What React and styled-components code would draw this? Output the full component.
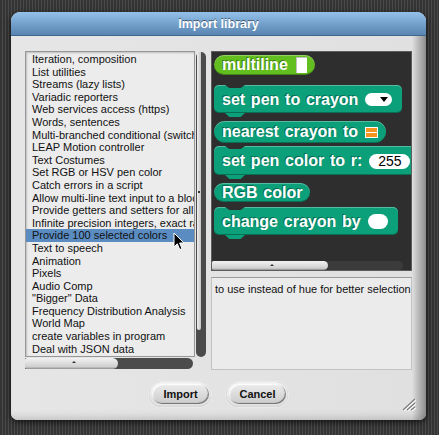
import React from "react";
import styled, { createGlobalStyle } from "styled-components";

const libraries = [
  "Iteration, composition",
  "List utilities",
  "Streams (lazy lists)",
  "Variadic reporters",
  "Web services access (https)",
  "Words, sentences",
  "Multi-branched conditional (switch)",
  "LEAP Motion controller",
  "Text Costumes",
  "Set RGB or HSV pen color",
  "Catch errors in a script",
  "Allow multi-line text input to a block",
  "Provide getters and setters for all GUI-controlled attributes",
  "Infinite precision integers, exact rationals, complex",
  "Provide 100 selected colors",
  "Text to speech",
  "Animation",
  "Pixels",
  "Audio Comp",
  "\"Bigger\" Data",
  "Frequency Distribution Analysis",
  "World Map",
  "create variables in program",
  "Deal with JSON data",
];

const SELECTED = 14;
const PEN = "#0ca07a";
const OPERATOR = "#63bf20";
const PALETTE_BG = "#2e2e2e";

function App() {
  return (
    <Page>
      <GlobalStyle />
      <Dialog>
        <TitleBar>Import library</TitleBar>
        <Body>
          <Main>
            <ListColumn>
              <ListBox>
                {libraries.map((name, i) => (
                  <Item key={name} $selected={i === SELECTED}>
                    {name}
                  </Item>
                ))}
              </ListBox>
              <VTrack>
                <VThumb />
              </VTrack>
              <HTrack $width={168}>
                <HThumb $width={93} />
              </HTrack>
              <Pointer width="13" height="19" viewBox="0 0 13 19">
                <path
                  d="M1 1 L1 15 L4.3 11.8 L6.8 17.6 L9 16.6 L6.6 11 L11 11 Z"
                  fill="#000"
                  stroke="#fff"
                  strokeWidth="1"
                  strokeLinejoin="round"
                />
              </Pointer>
            </ListColumn>

            <RightColumn>
              <Palette>
                <Blocks>
                  <Reporter $color={OPERATOR} $h={20} $mt={0}>
                    <span>multiline</span>
                    <TextSlot />
                  </Reporter>
                  <Command $color={PEN} $h={28} $mt={10}>
                    <span>set pen to crayon</span>
                    <DropSlot />
                  </Command>
                  <Reporter $color={PEN} $h={22} $mt={8}>
                    <span>nearest crayon to</span>
                    <ColorSlot />
                  </Reporter>
                  <Command $color={PEN} $h={29} $mt={3} $w={240}>
                    <span>set pen color to r:</span>
                    <NumSlot $w={41}>255</NumSlot>
                  </Command>
                  <Reporter $color={PEN} $h={19} $mt={8}>
                    <span>RGB color</span>
                  </Reporter>
                  <Command $color={PEN} $h={28} $mt={5}>
                    <span>change crayon by</span>
                    <NumSlot $w={20} />
                  </Command>
                </Blocks>
                <HTrack $width={191} $dark>
                  <HThumb $width={116} />
                </HTrack>
              </Palette>
              <Description>to use instead of hue for better selection</Description>
            </RightColumn>
          </Main>

          <ButtonRow>
            <PushButton>
              <ButtonFace>Import</ButtonFace>
            </PushButton>
            <PushButton>
              <ButtonFace>Cancel</ButtonFace>
            </PushButton>
          </ButtonRow>
        </Body>

        <ResizeHandle width="14" height="13" viewBox="0 0 14 13">
          <path d="M1 12 L13 1 M5 12 L13 5 M9 12 L13 9" stroke="#fff" strokeWidth="1.2" transform="translate(0.8 0.8)" />
          <path d="M1 12 L13 1 M5 12 L13 5 M9 12 L13 9" stroke="#7a7a7a" strokeWidth="1.2" />
        </ResizeHandle>
      </Dialog>
    </Page>
  );
}

const GlobalStyle = createGlobalStyle`
  html, body {
    margin: 0;
    padding: 0;
  }
  body {
    width: 439px;
    height: 435px;
    overflow: hidden;
    background: repeating-linear-gradient(90deg, #343434 0 2px, #4a4a4a 2px 3px);
    font-family: "Liberation Sans", Arial, sans-serif;
  }
`;

const Page = styled.div`
  padding: 12px 0 0 11px;
`;

const Dialog = styled.div`
  position: relative;
  width: 415px;
  height: 408px;
  display: flex;
  flex-direction: column;
  border-radius: 9px 9px 7px 7px;
  overflow: hidden;
  background: #e1e1e1;
  box-shadow: 0 2px 6px rgba(0, 0, 0, 0.7);
`;

const TitleBar = styled.div`
  flex: none;
  height: 23px;
  display: flex;
  align-items: center;
  justify-content: center;
  background: linear-gradient(#93c1ea, #5784b0);
  border-bottom: 1px solid #3f678e;
  color: #fff;
  font-size: 12.5px;
  font-weight: bold;
  text-shadow: 0 -1px 0 rgba(0, 0, 0, 0.5);
`;

const Body = styled.div`
  flex: 1;
  display: flex;
  flex-direction: column;
  padding: 15px 14px 0 14px;
  background: linear-gradient(90deg, #e6e6e6 0, #e0e0e0 calc(100% - 14px), #d4d4d4 calc(100% - 12px), #8c8c8c 100%);
  box-shadow: inset 0 -8px 8px -6px rgba(0, 0, 0, 0.18);
`;

const Main = styled.div`
  display: flex;
  gap: 5px;
  height: 319px;
`;

const ListColumn = styled.div`
  position: relative;
  width: 181px;
  display: grid;
  grid-template-columns: 170px 11px;
  grid-template-rows: 306px 13px;
`;

const ListBox = styled.div`
  background: #ececec;
  border: 1px solid #979797;
  box-shadow: inset 1px 1px 2px rgba(0, 0, 0, 0.2);
  padding-top: 1px;
  overflow: hidden;
`;

const Item = styled.div`
  height: 12.6px;
  line-height: 12.6px;
  padding-left: 6px;
  font-size: 11px;
  color: #111;
  white-space: nowrap;
  overflow: hidden;
  background: ${(p) => (p.$selected ? "#5a8cc2" : "transparent")};
`;

const VTrack = styled.div`
  margin: 1px 0 0 1px;
  width: 9px;
  display: flex;
  flex-direction: column;
  padding: 0 0 0 1px;
  border-radius: 5px;
  background: #4b4b4b;
`;

const VThumb = styled.div`
  position: relative;
  width: 4px;
  height: 278px;
  border-radius: 0 0 3px 3px;
  background: linear-gradient(90deg, #f0f0f0, #c4c4c4);

  &::after {
    content: "";
    position: absolute;
    left: 1px;
    top: 139px;
    width: 2px;
    height: 2px;
    background: #333;
  }
`;

const HTrack = styled.div`
  grid-column: 1 / span 2;
  margin-top: 1px;
  width: ${(p) => p.$width}px;
  height: ${(p) => (p.$dark ? 9 : 11)}px;
  display: flex;
  border-radius: 0 6px 6px 0;
  background: ${(p) => (p.$dark ? "#3b3b3b" : "#4b4b4b")};
  flex: none;
`;

const HThumb = styled.div`
  position: relative;
  width: ${(p) => p.$width}px;
  border-radius: 2px 6px 6px 2px;
  background: linear-gradient(#f2f2f2, #cfcfcf 80%, #8d8d8d);

  &::after {
    content: "";
    position: absolute;
    left: 50%;
    top: 3px;
    border-left: 2px solid transparent;
    border-right: 2px solid transparent;
    border-bottom: 2px solid #333;
  }
`;

const Pointer = styled.svg`
  position: absolute;
  left: 148px;
  top: 181px;
`;

const RightColumn = styled.div`
  width: 201px;
  display: flex;
  flex-direction: column;
`;

const Palette = styled.div`
  height: 220px;
  display: flex;
  flex-direction: column;
  box-sizing: border-box;
  background: ${PALETTE_BG};
  border: 1px solid #5c5c5c;
`;

const Blocks = styled.div`
  flex: 1;
  display: flex;
  flex-direction: column;
  align-items: flex-start;
  padding: 3px 0 0 2px;
  overflow: hidden;
`;

const BlockBase = styled.div`
  position: relative;
  flex: none;
  display: flex;
  align-items: center;
  gap: 7px;
  box-sizing: border-box;
  height: ${(p) => p.$h}px;
  margin-top: ${(p) => p.$mt}px;
  padding: 0 8px;
  background: ${(p) => p.$color};
  color: #fff;
  font-size: 16px;
  font-weight: bold;
  word-spacing: 1.3px;
  white-space: nowrap;
  text-shadow: -1px -1px 0 rgba(0, 0, 0, 0.35);
  box-shadow: inset 0 1px 0 rgba(255, 255, 255, 0.3), inset 0 -1px 0 rgba(0, 0, 0, 0.3);
`;

const Reporter = styled(BlockBase)`
  border-radius: 999px;
`;

const Command = styled(BlockBase)`
  border-radius: 5px;
  ${(p) => (p.$w ? `width: ${p.$w}px;` : "")}
  padding-right: 10px;
  padding-top: 1px;

  &::before,
  &::after {
    content: "";
    position: absolute;
    left: 11px;
    width: 20px;
    clip-path: polygon(0 0, 100% 0, 78% 100%, 22% 100%);
  }
  &::before {
    top: 0;
    height: 3px;
    background: ${PALETTE_BG};
  }
  &::after {
    bottom: -4px;
    height: 4px;
    background: ${(p) => p.$color};
  }
`;

const TextSlot = styled.div`
  width: 11px;
  height: 16px;
  margin-left: 1px;
  background: #fff;
  box-shadow: inset 1px 1px 0 rgba(0, 0, 0, 0.25);
`;

const DropSlot = styled.div`
  width: 27px;
  height: 13px;
  border-radius: 7px;
  background: #fff;
  display: flex;
  align-items: center;
  justify-content: flex-end;
  padding-right: 4px;
  box-sizing: border-box;

  &::after {
    content: "";
    border-left: 4px solid transparent;
    border-right: 4px solid transparent;
    border-top: 5px solid #000;
  }
`;

const ColorSlot = styled.div`
  width: 11px;
  height: 9px;
  border: 1.5px solid #fff;
  background: linear-gradient(#f7931e 0 40%, #fff 40% 60%, #f7931e 60%);
`;

const NumSlot = styled.div`
  width: ${(p) => p.$w}px;
  height: 15px;
  border-radius: 8px;
  background: #fff;
  color: #000;
  font-size: 14px;
  font-weight: normal;
  text-shadow: none;
  display: flex;
  align-items: center;
  justify-content: center;
  flex: none;
`;

const Description = styled.div`
  margin-top: 6px;
  flex: 1;
  padding: 5px 3px;
  background: #ebebeb;
  border: 1px solid #c2c2c2;
  border-top-color: #9a9a9a;
  font-size: 11px;
  color: #111;
  white-space: nowrap;
  overflow: hidden;
`;

const ButtonRow = styled.div`
  margin-top: 12px;
  display: flex;
  justify-content: center;
  gap: 15px;
`;

const PushButton = styled.button`
  width: 62px;
  height: 25px;
  padding: 2px 2px 3px 3px;
  border: none;
  border-radius: 13px;
  background: linear-gradient(#f6f6f6, #dedede);
  box-shadow: 0 0 0 1px #eaeaea, inset 0 0 1px rgba(0, 0, 0, 0.25);
  display: flex;
  font-family: inherit;
`;

const ButtonFace = styled.span`
  flex: 1;
  display: flex;
  align-items: center;
  justify-content: center;
  border-radius: 10px;
  background: linear-gradient(#ececec, #cbcbcb);
  box-shadow: inset -1px -1px 1px rgba(0, 0, 0, 0.45), inset 1px 1px 1px #fff;
  color: #111;
  font-size: 11px;
  font-weight: bold;
`;

const ResizeHandle = styled.svg`
  position: absolute;
  right: 10px;
  bottom: 9px;
`;

export default App;
